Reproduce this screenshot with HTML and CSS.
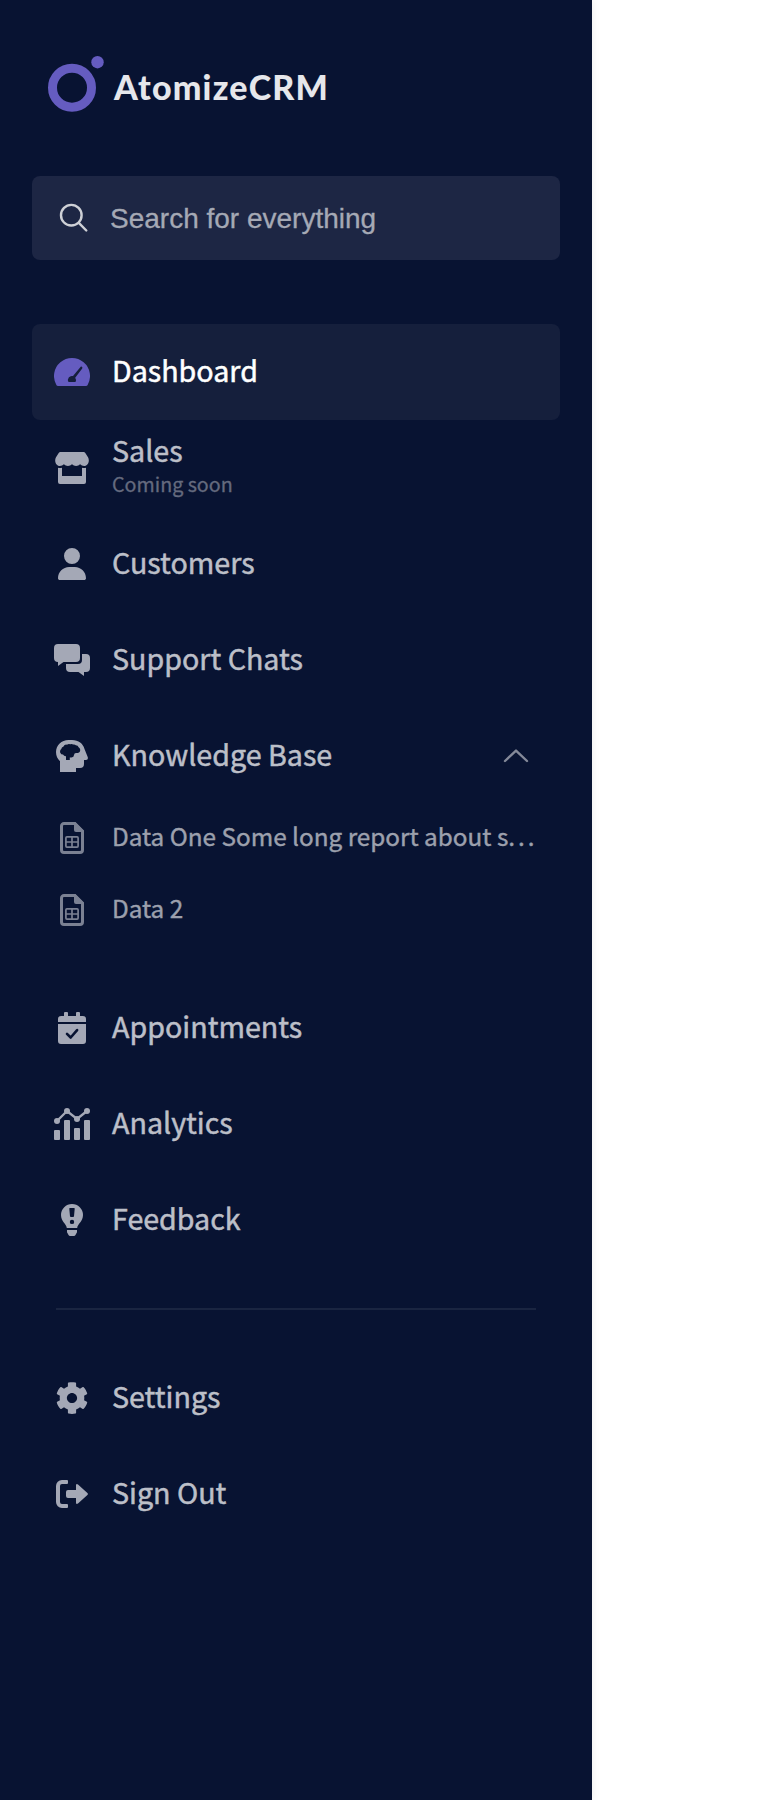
FILE: index.html
```html
<!DOCTYPE html>
<html lang="en">
<head>
<meta charset="utf-8">
<title>AtomizeCRM</title>
<link rel="stylesheet" href="styles.css">
</head>
<body>
<aside class="sidebar">
  <div class="brand">
    <svg class="brand-mark" width="56" height="56" viewBox="0 0 56 56"><circle cx="24" cy="31.7" r="19.5" fill="none" stroke="currentColor" stroke-width="9"/><circle cx="49.5" cy="6.2" r="6.2" fill="currentColor"/></svg>
    <span class="brand-name">AtomizeCRM</span>
  </div>
  <div class="search">
    <svg width="30" height="30" viewBox="0 0 30 30" fill="none" stroke="currentColor" stroke-width="2.4" stroke-linecap="round"><circle cx="12.3" cy="12.2" r="10.3"/><path d="M19.8 19.8l7.500 7.700"/></svg>
    <span class="search-text">Search for everything</span>
  </div>
  <nav class="nav">
    <a class="item active">
      <span class="icon"><svg width="36" height="28" viewBox="0 0 36 28"><path fill="currentColor" d="M2.5 27.2A18 18 0 1 1 33.5 27.2Q33 28 32 28H4Q3 28 2.5 27.2z"/><path class="cut" d="M14.5 24A4 4 0 0 1 19 18.1L26.3 9.2A1 1 0 0 1 28.2 10.4L21.2 19.8A4 4 0 0 1 21.5 24z"/></svg></span>
      <span class="label">Dashboard</span>
    </a>
    <a class="item">
      <span class="icon"><svg width="34" height="32" viewBox="0 0 34 32" fill="currentColor"><path d="M5.4 0H28.6Q29.7 0 30.3.9L33 5.3C35 8.7 33.2 14 29.1 14Q26.700 14 25.100 12.300Q23.500 14 21.100 14Q18.600 14 17 12.300Q15.400 14 12.900 14Q10.500 14 8.900 12.300Q7.300 14 4.900 14C.8 14-1 8.700 1 5.300L3.700.9Q4.300 0 5.400 0z"/><path d="M3 15.700Q5 16.200 7 15.700V24H27V15.700Q29 16.200 31 15.700V30A2 2 0 0 1 29 32H5A2 2 0 0 1 3 30z"/></svg></span>
      <span class="stack"><span class="label">Sales</span><span class="note">Coming soon</span></span>
    </a>
    <a class="item">
      <span class="icon"><svg width="28" height="32" viewBox="0 0 448 512"><path fill="currentColor" d="M224 256A128 128 0 1 0 224 0a128 128 0 1 0 0 256zm-45.700 48C79.800 304 0 383.800 0 482.300C0 498.700 13.300 512 29.700 512H418.300c16.400 0 29.700-13.300 29.700-29.700C448 383.800 368.200 304 269.700 304H178.300z"/></svg></span>
      <span class="label">Customers</span>
    </a>
    <a class="item">
      <span class="icon"><svg width="36" height="32" viewBox="0 0 36 32" fill="currentColor"><path d="M4 0h18a4 4 0 0 1 4 4v10a4 4 0 0 1-4 4H9.500L4 22v-4a4 4 0 0 1-4-4V4a4 4 0 0 1 4-4z"/><path d="M28 10h4a4 4 0 0 1 4 4v10a4 4 0 0 1-4 4h-2v4l-5.500-4H16a4 4 0 0 1-4-4v-4h12a4 4 0 0 0 4-4z"/></svg></span>
      <span class="label">Support Chats</span>
    </a>
    <a class="item">
      <span class="icon"><svg width="32" height="32" viewBox="0 0 32 32"><path fill="currentColor" fill-rule="evenodd" d="M4 32V21.200C1.500 19 0 15.700 0 12C0 5 5.500 0 12.500 0H16C22.500 0 27.200 3.800 28.500 9L31.800 17.300Q32.400 20 30 20H28V24A4 4 0 0 1 24 28H20V32zM10 20H13.800V17.500H15.500Q18 17 18 15Q18.200 13.200 20 13H22Q24.500 12.300 24.200 9.700Q24 8 22.600 7.300Q22 5.300 19.800 5.300Q18.800 4.200 17.200 4.600Q15.800 3.500 14.400 4.300Q12.600 3.300 11 4.700Q8.500 4.200 7.500 6.500Q5.500 7 5.300 9Q3.500 10.500 4.300 12.700Q5 14.500 7 14.600Q8 16.300 10 16.200z"/></svg></span>
      <span class="label">Knowledge Base</span>
      <svg class="chevron" width="26" height="14" viewBox="0 0 26 14" fill="none" stroke="currentColor" stroke-width="2.400" stroke-linecap="round" stroke-linejoin="round"><path d="M2 12L13 1.600L24 12"/></svg>
    </a>
    <div class="subnav">
      <a class="item sub">
        <span class="icon"><svg width="24" height="32" viewBox="0 0 24 32"><path fill="none" stroke="currentColor" stroke-width="3" d="M4 1.500H14.500L22.500 9.500V28A2.500 2.500 0 0 1 20 30.500H4A2.500 2.500 0 0 1 1.500 28V4A2.500 2.500 0 0 1 4 1.500z"/><path fill="currentColor" d="M14 0H15.500L24 8.500V10H16A2 2 0 0 1 14 8z"/><path fill="none" stroke="currentColor" stroke-width="1.700" d="M6.900 14.900H17.100A1 1 0 0 1 18.100 15.900V24.100A1 1 0 0 1 17.100 25.100H6.900A1 1 0 0 1 5.900 24.100V15.900A1 1 0 0 1 6.900 14.900zM12 15V25M6 20H18"/></svg></span>
        <span class="label">Data One Some long report about s<span class="dots">...</span></span>
      </a>
      <a class="item sub">
        <span class="icon"><svg width="24" height="32" viewBox="0 0 24 32"><path fill="none" stroke="currentColor" stroke-width="3" d="M4 1.500H14.500L22.500 9.500V28A2.500 2.500 0 0 1 20 30.500H4A2.500 2.500 0 0 1 1.500 28V4A2.500 2.500 0 0 1 4 1.500z"/><path fill="currentColor" d="M14 0H15.500L24 8.500V10H16A2 2 0 0 1 14 8z"/><path fill="none" stroke="currentColor" stroke-width="1.700" d="M6.900 14.900H17.100A1 1 0 0 1 18.100 15.900V24.100A1 1 0 0 1 17.100 25.100H6.900A1 1 0 0 1 5.900 24.100V15.900A1 1 0 0 1 6.900 14.900zM12 15V25M6 20H18"/></svg></span>
        <span class="label">Data 2</span>
      </a>
    </div>
    <a class="item">
      <span class="icon"><svg width="28" height="32" viewBox="0 0 28 32"><path fill="currentColor" d="M0 10V7A3 3 0 0 1 3 4H6V1A1 1 0 0 1 7 0H9A1 1 0 0 1 10 1V4H18V1A1 1 0 0 1 19 0H21A1 1 0 0 1 22 1V4H25A3 3 0 0 1 28 7V10zM0 12H28V29A3 3 0 0 1 25 32H3A3 3 0 0 1 0 29z"/><path class="tick" d="M9 21.800L12.700 25.500L19.100 18.100"/></svg></span>
      <span class="label">Appointments</span>
    </a>
    <a class="item">
      <span class="icon"><svg width="36" height="32" viewBox="0 0 36 32" fill="currentColor"><rect y="22" width="6" height="10" rx="1"/><rect x="10" y="12" width="6" height="20" rx="1"/><rect x="20" y="20" width="6" height="12" rx="1"/><rect x="30" y="12" width="6" height="20" rx="1"/><circle cx="3" cy="13" r="3"/><circle cx="13" cy="3" r="3"/><circle cx="23" cy="11" r="3"/><circle cx="33" cy="3" r="3"/><path fill="none" stroke="currentColor" stroke-width="2.400" d="M3 13L13 3L23 11L33 3"/></svg></span>
      <span class="label">Analytics</span>
    </a>
    <a class="item">
      <span class="icon"><svg width="22" height="32" viewBox="0 0 22 32"><path fill="currentColor" fill-rule="evenodd" d="M5.800 24C5.500 20 0 17.500 0 11A11 11 0 0 1 22 11C22 17.500 16.500 20 16.200 24zM8.900 4Q8.200 4 8.300 4.800L9 12.200Q9.100 13 9.900 13H12.100Q12.900 13 13 12.200L13.700 4.800Q13.800 4 13.100 4zM11 15.700A2.200 2.200 0 1 0 11 20.100A2.200 2.200 0 1 0 11 15.700zM6 26H16V28.300L14.300 31.200Q13.900 32 13 32H9Q8.100 32 7.700 31.200L6 28.300z"/></svg></span>
      <span class="label">Feedback</span>
    </a>
    <hr class="divider">
    <a class="item">
      <span class="icon"><svg width="32" height="32" viewBox="6 6 500 500"><path fill="currentColor" d="M487.400 315.700l-42.600-24.600c4.300-23.200 4.300-47 0-70.200l42.600-24.600c4.900-2.800 7.100-8.600 5.500-14-11.100-35.600-30-67.800-54.700-94.600-3.800-4.100-10-5.100-14.800-2.300L380.800 110c-17.900-15.400-38.500-27.300-60.800-35.100V25.800c0-5.600-3.900-10.500-9.400-11.700-36.700-8.200-74.300-7.800-109.200 0-5.500 1.200-9.400 6.100-9.400 11.700V75c-22.200 7.900-42.800 19.800-60.800 35.100L88.700 85.500c-4.900-2.800-11-1.900-14.800 2.300-24.700 26.700-43.600 58.900-54.700 94.600-1.700 5.400.6 11.200 5.500 14L67.300 221c-4.300 23.200-4.300 47 0 70.200l-42.600 24.600c-4.900 2.800-7.100 8.600-5.500 14 11.100 35.600 30 67.800 54.700 94.600 3.800 4.100 10 5.100 14.800 2.300l42.600-24.600c17.900 15.400 38.500 27.300 60.800 35.100v49.200c0 5.600 3.900 10.500 9.400 11.700 36.700 8.200 74.300 7.800 109.200 0 5.500-1.200 9.400-6.100 9.400-11.700v-49.200c22.200-7.900 42.800-19.800 60.800-35.100l42.600 24.600c4.900 2.800 11 1.900 14.800-2.300 24.700-26.700 43.600-58.900 54.700-94.600 1.500-5.500-.7-11.300-5.600-14.100zM256 336c-44.100 0-80-35.900-80-80s35.900-80 80-80 80 35.900 80 80-35.900 80-80 80z"/></svg></span>
      <span class="label">Settings</span>
    </a>
    <a class="item">
      <span class="icon"><svg width="32" height="28" viewBox="0 0 32 28" fill="currentColor"><path d="M6 0H11A1 1 0 0 1 12 1V3A1 1 0 0 1 11 4H6A2 2 0 0 0 4 6V22A2 2 0 0 0 6 24H11A1 1 0 0 1 12 25V27A1 1 0 0 1 11 28H6A6 6 0 0 1 0 22V6A6 6 0 0 1 6 0z"/><path d="M12 10H20V5.200Q20.200 3.300 22 4.400L31.400 13Q32.400 14 31.400 15L22 23.600Q20.200 24.700 20 22.800V18H12A2 2 0 0 1 10 16V12A2 2 0 0 1 12 10z"/></svg></span>
      <span class="label">Sign Out</span>
    </a>
  </nav>
</aside>
</body>
</html>
```
FILE: styles.css
```css
* { box-sizing: border-box; }
body { margin: 0; background: #fff; font-family: "Noto Sans CJK KR", "Noto Sans", sans-serif; }
svg { display: block; flex: none; }
.sidebar {
  width: 592px;
  height: 1800px;
  padding: 56px 32px 0;
  background: #081332;
  box-shadow: 0 0 8px rgba(0, 0, 0, .08);
}
.brand { display: flex; height: 56px; padding-left: 16px; gap: 10px; }
.brand-mark { color: #655cc0; }
.brand-name {
  padding-top: 11px;
  font: 900 34px/40px Lato, sans-serif;
  letter-spacing: 1.2px;
  color: #e6e7eb;
  white-space: nowrap;
}
.search {
  display: flex;
  align-items: center;
  gap: 21px;
  height: 84px;
  margin-top: 64px;
  padding-left: 27px;
  border-radius: 8px;
  background: #1d2644;
  color: #ced0d6;
}
.search-text { padding-top: 2px; font: 28px/40px "Liberation Sans", Arial, sans-serif; color: #a5a9b5; -webkit-text-stroke: .3px currentColor; }
.nav { margin-top: 64px; }
.item {
  display: flex;
  align-items: center;
  height: 96px;
  padding: 0 26px 0 22px;
  border-radius: 8px;
  color: #bcbfc8;
}
.icon { display: flex; flex: none; justify-content: center; width: 36px; margin-right: 22px; color: #a4a8b6; }
.label { padding-bottom: 4px; font-size: 28.65px; line-height: 40px; font-weight: 400; white-space: nowrap; -webkit-text-stroke: .5px currentColor; }
.active { background: #151f3c; color: #fff; }
.active .icon { color: #655cc0; }
.cut { fill: #151f3c; }
.tick { fill: none; stroke: #081332; stroke-width: 2.6; stroke-linecap: round; stroke-linejoin: round; }
.stack { display: flex; flex-direction: column; padding-bottom: 9px; }
.stack .label { padding: 0; }
.note { font-size: 19.7px; line-height: 28px; color: #646a7e; -webkit-text-stroke: .3px currentColor; }
.chevron { margin-left: auto; margin-right: 5px; color: #848999; }
.subnav { margin-top: -2px; padding-bottom: 34px; }
.sub { height: 72px; padding-right: 0; color: #9ca0ad; }
.sub .label { padding-bottom: 4px; font-size: 24.3px; -webkit-text-stroke-width: .4px; }
.sub .icon { color: #7b8193; }
.dots { margin-left: 0; letter-spacing: 3px; }
.divider { height: 2px; margin: 40px 24px; border: 0; background: #1a2541; }
```
